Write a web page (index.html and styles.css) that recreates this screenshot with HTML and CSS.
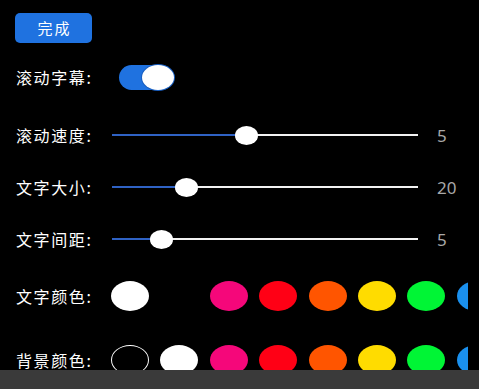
FILE: index.html
```html
<!DOCTYPE html>
<html lang="zh">
<head>
<meta charset="utf-8">
<link rel="stylesheet" href="styles.css">
</head>
<body>
<div class="page">
  <div class="header">
    <button class="done">完成</button>
  </div>

  <div class="row row-toggle">
    <span class="label">滚动字幕:</span>
    <div class="toggle on"><div class="knob"></div></div>
  </div>

  <div class="row row-s1">
    <span class="label">滚动速度:</span>
    <div class="slider" style="--p:44.1%"><div class="fill"></div><div class="thumb"></div></div>
    <span class="value">5</span>
  </div>

  <div class="row row-s2">
    <span class="label">文字大小:</span>
    <div class="slider" style="--p:24.5%"><div class="fill"></div><div class="thumb"></div></div>
    <span class="value">20</span>
  </div>

  <div class="row row-s3">
    <span class="label">文字间距:</span>
    <div class="slider" style="--p:16.3%"><div class="fill"></div><div class="thumb"></div></div>
    <span class="value">5</span>
  </div>

  <div class="row row-c1">
    <span class="label">文字颜色:</span>
    <div class="swatches">
      <span class="dot white"></span>
      <span class="dot black"></span>
      <span class="dot pink"></span>
      <span class="dot red"></span>
      <span class="dot orange"></span>
      <span class="dot yellow"></span>
      <span class="dot green"></span>
      <span class="dot blue"></span>
    </div>
  </div>

  <div class="row row-c2">
    <span class="label">背景颜色:</span>
    <div class="swatches">
      <span class="dot black outlined"></span>
      <span class="dot white"></span>
      <span class="dot pink"></span>
      <span class="dot red"></span>
      <span class="dot orange"></span>
      <span class="dot yellow"></span>
      <span class="dot green"></span>
      <span class="dot blue"></span>
    </div>
  </div>
</div>
<div class="bottom-bar"></div>
</body>
</html>
```

FILE: styles.css
```css
html, body {
  margin: 0;
  padding: 0;
  background: #000;
  overflow: hidden;
}

body {
  width: 479px;
  height: 389px;
  font-family: "Noto Sans CJK SC", "Noto Sans", sans-serif;
  color: #fff;
}

.page {
  padding: 13px 0 0 16px;
}

.header {
  display: flex;
}

.done {
  margin-left: -1px;
  width: 77px;
  height: 30px;
  border: none;
  border-radius: 5px;
  background: #1f72e0;
  color: #fff;
  font-family: "Noto Sans CJK SC", sans-serif;
  font-size: 15px;
  letter-spacing: 2px;
  padding: 0 0 0 2px;
  line-height: 30px;
}

.row {
  display: flex;
  align-items: center;
  height: 30px;
}

.row-toggle { margin-top: 19px; }
.row-s1 { margin-top: 28px; }
.row-s2 { margin-top: 22px; }
.row-s3 { margin-top: 22px; }
.row-c1 { margin-top: 27px; }
.row-c2 { margin-top: 34px; }

.label {
  width: 96px;
  flex: none;
  font-size: 16px;
  letter-spacing: 1.6px;
  line-height: 30px;
  white-space: nowrap;
}

.toggle {
  margin-left: 7px;
  width: 55px;
  height: 25px;
  border-radius: 13px;
  background: #1f72e0;
  display: flex;
  justify-content: flex-end;
  align-items: center;
}

.knob {
  width: 32px;
  height: 25px;
  border-radius: 50%;
  background: #fff;
  box-shadow: 0 0 0 1px #1a5fc0;
}

.slider {
  position: relative;
  width: 306px;
  height: 2px;
  background: #f2f2f2;
  flex: none;
}

.fill {
  width: var(--p);
  height: 100%;
  background: #2f62c4;
}

.thumb {
  position: absolute;
  left: var(--p);
  top: 50%;
  width: 23px;
  height: 19px;
  margin-left: -11.5px;
  margin-top: -9.5px;
  border-radius: 50%;
  background: #fff;
}

.value {
  margin-left: 19px;
  font-family: "Noto Sans", sans-serif;
  font-size: 17px;
  color: #a8a8a8;
}

.swatches {
  display: flex;
  gap: 11.4px;
  width: 357px;
  margin-left: -1px;
  overflow: hidden;
  flex: none;
}

.dot {
  flex: none;
  width: 38px;
  height: 30px;
  border-radius: 50%;
  box-sizing: border-box;
}

.white { background: #fff; }
.black { background: #000; }
.outlined { border: 1.5px solid #fff; }
.pink { background: #f5077a; }
.red { background: #ff0015; }
.orange { background: #ff5500; }
.yellow { background: #ffdc00; }
.green { background: #00f535; }
.blue { background: #1a90ee; }

.bottom-bar {
  position: fixed;
  left: 0;
  right: 0;
  bottom: 0;
  height: 19px;
  background: #3a3a3a;
}
```
